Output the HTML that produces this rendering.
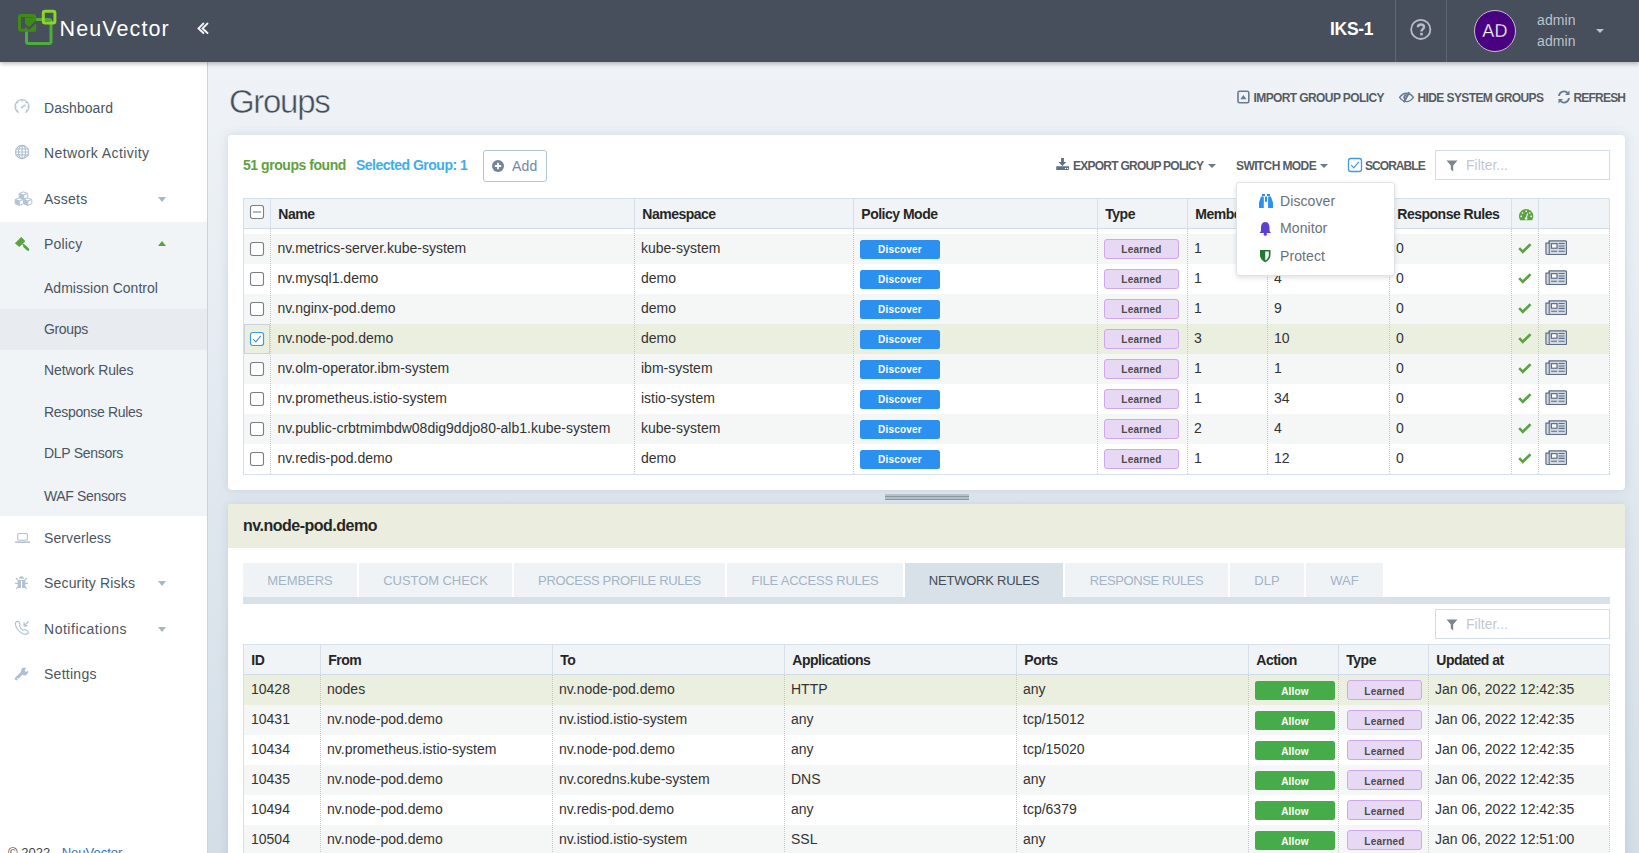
<!DOCTYPE html>
<html><head><meta charset="utf-8">
<style>
*{box-sizing:border-box;margin:0;padding:0}
html,body{width:1639px;height:853px;overflow:hidden}
body{font-family:"Liberation Sans",sans-serif;background:linear-gradient(to bottom,#eff3f7 62px,#eef2f6 100px,#d3dee7 853px);position:relative;color:#333}
.abs{position:absolute}
#hdr{position:absolute;left:0;top:0;width:1639px;height:62px;background:#464f5b;box-shadow:0 2px 4px rgba(0,0,0,.25);z-index:5}
#side{position:absolute;left:0;top:62px;width:208px;height:791px;background:#fff;border-right:1px solid #cfd1d4;z-index:3}
.nav{position:absolute;left:0;width:207px;height:40px;font-size:14px;color:#4a5563;letter-spacing:.3px}
.nav .t{position:absolute;left:44px;top:0;line-height:40px;white-space:nowrap}
.nav .ic{position:absolute;left:15px;top:13px;width:15px;height:15px}
.nav .car{position:absolute;left:158px;top:18px;width:0;height:0;border-left:4.5px solid transparent;border-right:4.5px solid transparent;border-top:5px solid #a9b4c0}
.card{position:absolute;left:228px;width:1397px;background:#fff;border-radius:4px;box-shadow:0 0 6px rgba(40,60,90,.12)}
</style></head>
<body>
<div id="hdr">
<svg class="abs" style="left:0;top:0" width="70" height="62" viewBox="0 0 70 62">
<rect x="26.5" y="19.5" width="24.5" height="24" rx="2" fill="none" stroke="#4dae3c" stroke-width="3"/>
<rect x="19.5" y="15.5" width="15.2" height="14.8" rx="1.5" fill="#464f5b" stroke="#3e8b16" stroke-width="3"/>
<path d="M25 17.5 H36 V31.5 H25 Z" fill="#3e8b16"/>
<path d="M24.5 24.5 L29 28.5 L36.5 21.5" fill="none" stroke="#464f5b" stroke-width="2.2"/>
<rect x="43.3" y="11.3" width="11.6" height="11.8" rx="1.8" fill="none" stroke="#8fd52a" stroke-width="3"/>
</svg>
<div class="abs" style="left:59.5px;top:13.5px;font-size:21.5px;line-height:30px;color:#fff;letter-spacing:1.1px">NeuVector</div>
<svg class="abs" style="left:196px;top:22px" width="14" height="13" viewBox="0 0 14 13">
<path d="M7.4 1.5 L2.5 6.4 L7.4 11 M11.5 1.5 L6.6 6.4 L11.5 11" fill="none" stroke="#f4f5f7" stroke-width="1.9" stroke-linecap="round"/>
</svg>
<div class="abs" style="left:1330px;top:18px;font-size:17.5px;line-height:22px;color:#fff;font-weight:bold;letter-spacing:-.3px">IKS-1</div>
<div class="abs" style="left:1395px;top:0;width:1px;height:62px;background:#5d6672"></div>
<div class="abs" style="left:1446px;top:0;width:1px;height:62px;background:#5d6672"></div>
<svg class="abs" style="left:1409px;top:18px" width="24" height="24" viewBox="0 0 24 24">
<circle cx="11.75" cy="11.4" r="9.6" fill="none" stroke="#b8bdc5" stroke-width="1.8"/>
<path d="M8.9 9.2 C8.9 7.3 10.3 6.4 11.9 6.4 C13.7 6.4 15 7.5 15 9.1 C15 11 12.4 11.3 12.4 13.6" fill="none" stroke="#b8bdc5" stroke-width="2.5"/>
<rect x="11.2" y="14.8" width="2.6" height="2.6" fill="#b8bdc5"/>
</svg>
<div class="abs" style="left:1474px;top:10px;width:42px;height:42px;border-radius:50%;background:#4a0181;border:1px solid #c4bfc9"></div>
<div class="abs" style="left:1474px;top:10px;width:42px;height:42px;line-height:42px;text-align:center;color:#fff;font-size:18px;letter-spacing:.2px;-webkit-text-stroke:.3px #4a0181">AD</div>
<div class="abs" style="left:1537px;top:10px;font-size:14px;line-height:20px;color:#bcc2ca;letter-spacing:.1px">admin</div>
<div class="abs" style="left:1537px;top:31px;font-size:14px;line-height:20px;color:#bcc2ca;letter-spacing:.1px">admin</div>
<div class="abs" style="left:1596px;top:29px;width:0;height:0;border-left:4px solid transparent;border-right:4px solid transparent;border-top:4.5px solid #bcc2ca"></div>
</div>
<div id="side">
<div class="abs" style="left:0;top:160px;width:207px;height:294px;background:#f0f4f7"></div>
<div class="abs" style="left:0;top:247px;width:207px;height:41px;background:#e8ecf0"></div>
<div class="abs" style="left:44px;top:36.1px;font-size:14px;line-height:20px;white-space:nowrap;color:#4a5562;letter-spacing:0.06px">Dashboard</div>
<div class="abs" style="left:44px;top:81.1px;font-size:14px;line-height:20px;white-space:nowrap;color:#4a5562;letter-spacing:0.42px">Network Activity</div>
<div class="abs" style="left:44px;top:127.1px;font-size:14px;line-height:20px;white-space:nowrap;color:#4a5562;letter-spacing:0.23px">Assets</div>
<div class="abs" style="left:44px;top:172.1px;font-size:14px;line-height:20px;white-space:nowrap;color:#4a5562;letter-spacing:0.17px">Policy</div>
<div class="abs" style="left:44px;top:216.1px;font-size:14px;line-height:20px;white-space:nowrap;color:#4a5562;letter-spacing:0.02px">Admission Control</div>
<div class="abs" style="left:44px;top:256.6px;font-size:14px;line-height:20px;white-space:nowrap;color:#4a5562;letter-spacing:-0.35px">Groups</div>
<div class="abs" style="left:44px;top:297.8px;font-size:14px;line-height:20px;white-space:nowrap;color:#4a5562;letter-spacing:-0.13px">Network Rules</div>
<div class="abs" style="left:44px;top:339.8px;font-size:14px;line-height:20px;white-space:nowrap;color:#4a5562;letter-spacing:-0.32px">Response Rules</div>
<div class="abs" style="left:44px;top:381.3px;font-size:14px;line-height:20px;white-space:nowrap;color:#4a5562;letter-spacing:-0.29px">DLP Sensors</div>
<div class="abs" style="left:44px;top:423.6px;font-size:14px;line-height:20px;white-space:nowrap;color:#4a5562;letter-spacing:-0.35px">WAF Sensors</div>
<div class="abs" style="left:44px;top:466.4px;font-size:14px;line-height:20px;white-space:nowrap;color:#4a5562;letter-spacing:0.09px">Serverless</div>
<div class="abs" style="left:44px;top:511.3px;font-size:14px;line-height:20px;white-space:nowrap;color:#4a5562;letter-spacing:0.17px">Security Risks</div>
<div class="abs" style="left:44px;top:556.7px;font-size:14px;line-height:20px;white-space:nowrap;color:#4a5562;letter-spacing:0.52px">Notifications</div>
<div class="abs" style="left:44px;top:601.9px;font-size:14px;line-height:20px;white-space:nowrap;color:#4a5562;letter-spacing:0.27px">Settings</div>
<div class="abs" style="left:158px;top:135px;width:0;height:0;border-left:4px solid transparent;border-right:4px solid transparent;border-top:5px solid #a9b5c2"></div>
<div class="abs" style="left:158px;top:179px;width:0;height:0;border-left:4px solid transparent;border-right:4px solid transparent;border-bottom:5px solid #5aa33f"></div>
<div class="abs" style="left:158px;top:519px;width:0;height:0;border-left:4px solid transparent;border-right:4px solid transparent;border-top:5px solid #a9b5c2"></div>
<div class="abs" style="left:158px;top:565px;width:0;height:0;border-left:4px solid transparent;border-right:4px solid transparent;border-top:5px solid #a9b5c2"></div>

<svg class="abs" style="left:10px;top:34px" width="26" height="22" viewBox="0 0 26 22"><path d="M8.6 16.6 A6.9 6.9 0 1 1 15.4 16.6" fill="none" stroke="#b3c4d6" stroke-width="1.3"/><path d="M12 4 V5.6 M5.2 10.8 H6.8 M17.2 10.8 H18.8 M7.2 6 L8.3 7.1 M16.8 6 L15.7 7.1 M6.6 14.5 L7.8 13.8 M17.4 14.5 L16.2 13.8" stroke="#b3c4d6" stroke-width="1.3"/><path d="M11.6 11.6 L15 9.2" stroke="#b3c4d6" stroke-width="1.6" stroke-linecap="round"/></svg>
<svg class="abs" style="left:10px;top:78px" width="26" height="24" viewBox="0 0 26 24"><circle cx="12.1" cy="12" r="6.6" fill="none" stroke="#afc0d2" stroke-width="1.2"/><ellipse cx="12.1" cy="12" rx="3.6" ry="6.6" fill="none" stroke="#afc0d2" stroke-width="1.1"/><path d="M5.6 9 H18.6 M5.4 12 H18.8 M5.6 14.9 H18.6 M12.1 5.4 V18.6" stroke="#afc0d2" stroke-width="1.1"/></svg>
<svg class="abs" style="left:10px;top:124px" width="26" height="24" viewBox="0 0 26 24"><g stroke="#b3c4d6" stroke-width="1" stroke-linejoin="round"><path d="M9.2 7.5 L13.5 5.9 L17.8 7.5 L13.5 9.1 Z" fill="#fff"/><path d="M9.2 7.5 L13.5 9.1 V13.2 L9.2 11.6 Z" fill="#b3c4d6"/><path d="M13.5 9.1 L17.8 7.5 V11.6 L13.5 13.2 Z" fill="#fff"/><path d="M5.2 13.5 L9.3 11.9 L13.3 13.5 L9.3 15.1 Z" fill="#fff"/><path d="M5.2 13.5 L9.3 15.1 V19.4 L5.2 17.8 Z" fill="#b3c4d6"/><path d="M9.3 15.1 L13.3 13.5 V17.8 L9.3 19.4 Z" fill="#fff"/><path d="M13.7 13.5 L17.8 11.9 L21.8 13.5 L17.8 15.1 Z" fill="#fff"/><path d="M13.7 13.5 L17.8 15.1 V19.4 L13.7 17.8 Z" fill="#b3c4d6"/><path d="M17.8 15.1 L21.8 13.5 V17.8 L17.8 19.4 Z" fill="#fff"/></g></svg>
<svg class="abs" style="left:14px;top:174px" width="17" height="16" viewBox="0 0 17 16"><path d="M1.35 7.3 L7.3 1.35 L10.9 5.3 L5.3 10.6 Z" fill="#5aa33f" stroke="#5aa33f" stroke-width=".8" stroke-linejoin="round"/><path d="M8.2 8.4 L9.2 7.4 L14.6 12.3 L12.9 14 Z" fill="#5aa33f"/><path d="M10.5 10.2 L14 13.6" stroke="#5aa33f" stroke-width="2.6" stroke-linecap="round"/></svg>
<svg class="abs" style="left:10px;top:464px" width="26" height="24" viewBox="0 0 26 24"><rect x="7.7" y="7.5" width="9.7" height="6.8" rx="1.2" fill="none" stroke="#afc0d2" stroke-width="1.1"/><rect x="5.1" y="15.4" width="14.9" height="1.5" fill="#afc0d2"/></svg>
<svg class="abs" style="left:10px;top:509px" width="26" height="24" viewBox="0 0 26 24"><g fill="#afc0d2"><path d="M9 7.75 A2.45 2.4 0 0 1 13.9 7.75 Z"/><rect x="7.75" y="9" width="7.6" height="7.9" rx=".8"/></g><rect x="10.9" y="9.8" width="1.2" height="7.2" fill="#fff"/><path d="M6.05 7.3 L8.2 9 M16.8 7.3 L14.6 9 M5.1 12.4 H8 M15 12.4 H17.9 M6.05 17.7 L8.2 15.9 M16.8 17.7 L14.6 15.9" stroke="#afc0d2" stroke-width="1.2"/></svg>
<svg class="abs" style="left:10px;top:554px" width="26" height="24" viewBox="0 0 26 24"><path d="M7.6 5.4 C6.2 5.4 5.3 6.6 5.4 8 C5.8 11.5 8.5 15 11.5 17 C13 18 14.5 18.5 15.8 18.3 C17.2 18 18.5 17 18.3 16 C18.2 15.3 16.8 14.6 15.5 13.6 C14.8 13.2 14.1 14.3 13 14.2 C11.5 13.5 9.8 11.5 9.5 10 C9.6 9.2 10.3 8.8 10 8 C9.5 6.8 8.6 5.4 7.6 5.4 Z" fill="none" stroke="#afc0d2" stroke-width="1.1"/><path d="M18.6 5.4 L14.4 9.6 M14.1 6.3 V9.8 H17.6" fill="none" stroke="#afc0d2" stroke-width="1.2"/></svg>
<svg class="abs" style="left:10px;top:600px" width="26" height="24" viewBox="0 0 26 24"><path d="M6.2 16.8 L12.4 10.6" stroke="#afc0d2" stroke-width="3" stroke-linecap="round"/><path d="M11.2 10.8 A3.6 3.6 0 0 1 16.2 6.1 L14.6 8.6 L16.4 10.3 L18.1 8.3 A3.6 3.6 0 0 1 13.1 12.9 Z" fill="#afc0d2"/><circle cx="7.4" cy="16.5" r=".6" fill="#fff"/></svg>

<div class="abs" style="left:8px;top:783.5px;font-size:13px;line-height:14px;color:#444;white-space:nowrap;letter-spacing:0">&copy; 2022 - <span style="color:#1f76d0">NeuVector</span></div>
</div>
<!--MAIN-->
<div class="abs" style="left:229px;top:91.57px;font-size:33px;line-height:20px;white-space:nowrap;color:#444e5a;letter-spacing:-1.3px;-webkit-text-stroke:.5px #eef2f6">Groups</div>
<div class="abs" style="left:1253.5px;top:87.84px;font-size:12px;line-height:20px;white-space:nowrap;color:#565c64;font-weight:bold;letter-spacing:-.6px">IMPORT GROUP POLICY</div>
<div class="abs" style="left:1417.5px;top:87.84px;font-size:12px;line-height:20px;white-space:nowrap;color:#565c64;font-weight:bold;letter-spacing:-.6px">HIDE SYSTEM GROUPS</div>
<div class="abs" style="left:1573.5px;top:87.84px;font-size:12px;line-height:20px;white-space:nowrap;color:#565c64;font-weight:bold;letter-spacing:-.6px;letter-spacing:-.8px">REFRESH</div>
<svg class="abs" style="left:1237px;top:90px" width="13" height="14" viewBox="0 0 13 14"><rect x="1" y="1.2" width="10.8" height="11.5" rx="1.5" fill="none" stroke="#6a7a90" stroke-width="1.6"/><path d="M3.3 9.2 L6.4 5 L9.5 9.2 Z" fill="#6a7a90"/></svg>
<svg class="abs" style="left:1395px;top:85px" width="25" height="25" viewBox="0 0 25 25"><path d="M4.6 12.4 C7 9 9.5 8.2 11.5 8.2 C13.5 8.2 16 9 18.4 12.4 C16 15.8 13.5 16.6 11.5 16.6 C9.5 16.6 7 15.8 4.6 12.4 Z" fill="none" stroke="#6a7a90" stroke-width="1.4"/><path d="M14.3 7.3 L8.8 17.3" stroke="#6a7a90" stroke-width="2"/><path d="M11.6 10 A2.5 2.5 0 0 0 10 14.4" fill="none" stroke="#6a7a90" stroke-width="1.9"/></svg>
<svg class="abs" style="left:1557px;top:90px" width="14" height="14" viewBox="0 0 14 14"><path d="M2 6 A5 5 0 0 1 11 3.5" fill="none" stroke="#6a7a90" stroke-width="1.8"/><path d="M12.5 0.5 V5 H8 Z" fill="#6a7a90"/><path d="M12 8 A5 5 0 0 1 3 10.5" fill="none" stroke="#6a7a90" stroke-width="1.8"/><path d="M1.5 13.5 V9 H6 Z" fill="#6a7a90"/></svg>
<div class="abs" style="left:228px;top:135px;width:1397px;height:355px;background:#fff;border-radius:4px;box-shadow:0 0 10px rgba(70,100,140,.17)"></div>
<div class="abs" style="left:243px;top:155.15px;font-size:14px;line-height:20px;white-space:nowrap;color:#5fa140;font-weight:bold;letter-spacing:-.45px">51 groups found</div>
<div class="abs" style="left:356px;top:155.15px;font-size:14px;line-height:20px;white-space:nowrap;color:#3daee9;font-weight:bold;letter-spacing:-.5px">Selected Group: 1</div>
<div class="abs" style="left:483px;top:150px;width:64px;height:32px;border:1px solid #b3c4d2;border-radius:3px;background:#fff"></div>
<svg class="abs" style="left:491px;top:159px" width="14" height="14" viewBox="0 0 14 14"><circle cx="7" cy="7" r="6" fill="#72839b"/><path d="M7 3.8 V10.2 M3.8 7 H10.2" stroke="#fff" stroke-width="1.8"/></svg>
<div class="abs" style="left:512px;top:156.15px;font-size:14px;line-height:20px;white-space:nowrap;color:#76879e;letter-spacing:.2px">Add</div>
<div class="abs" style="left:1073px;top:155.84px;font-size:12px;line-height:20px;white-space:nowrap;color:#565c64;font-weight:bold;letter-spacing:-.6px;letter-spacing:-.75px">EXPORT GROUP POLICY</div>
<svg class="abs" style="left:1050px;top:150px" width="25" height="30" viewBox="0 0 25 30"><path d="M11.1 8.1 H13.9 V12.1 H16.4 L12.4 15.9 L8.4 12.1 H11.1 Z" fill="#5f7089"/><rect x="6.2" y="16.2" width="12.8" height="3.7" rx=".4" fill="#5f7089"/><circle cx="15.5" cy="18.4" r=".6" fill="#fff"/><circle cx="17.4" cy="18.4" r=".6" fill="#fff"/></svg>
<div class="abs" style="left:1207.5px;top:163.5px;width:0;height:0;border-left:4.0px solid transparent;border-right:4.0px solid transparent;border-top:4.5px solid #6a7a90"></div>
<div class="abs" style="left:1236px;top:155.84px;font-size:12px;line-height:20px;white-space:nowrap;color:#565c64;font-weight:bold;letter-spacing:-.6px">SWITCH MODE</div>
<div class="abs" style="left:1320px;top:163.5px;width:0;height:0;border-left:4.0px solid transparent;border-right:4.0px solid transparent;border-top:4.5px solid #6a7a90"></div>
<svg class="abs" style="left:1347px;top:157px" width="16" height="16" viewBox="0 0 16 16"><rect x="1.5" y="1.5" width="13" height="13" rx="2.2" fill="#fff" stroke="#3d9ae3" stroke-width="1.3"/><path d="M4.2 8.2 L6.8 10.8 L11.8 4.8" fill="none" stroke="#3d9ae3" stroke-width="1.2"/></svg>
<div class="abs" style="left:1365px;top:155.84px;font-size:12px;line-height:20px;white-space:nowrap;color:#565c64;font-weight:bold;letter-spacing:-.6px;letter-spacing:-.95px">SCORABLE</div>
<div class="abs" style="left:1435px;top:150px;width:175px;height:30px;border:1px solid #d3dde8;background:#fff"></div>
<svg class="abs" style="left:1446px;top:160px" width="12" height="12" viewBox="0 0 12 12"><path d="M0.5 0.5 H11.5 L7.2 5.5 V11.5 L4.8 9.5 V5.5 Z" fill="#7e858e"/></svg>
<div class="abs" style="left:1466px;top:155.15px;font-size:14px;line-height:20px;white-space:nowrap;color:#c3c7d0">Filter...</div>
<div class="abs" style="left:243px;top:198px;width:1367px;height:31px;background:#f0f4f7;border:1px solid #d6e0ea;border-bottom:1px solid #cfdbe7"></div>
<div class="abs" style="left:270px;top:199px;width:1px;height:30px;background:#d6e0ea"></div>
<div class="abs" style="left:634px;top:199px;width:1px;height:30px;background:#d6e0ea"></div>
<div class="abs" style="left:853px;top:199px;width:1px;height:30px;background:#d6e0ea"></div>
<div class="abs" style="left:1097px;top:199px;width:1px;height:30px;background:#d6e0ea"></div>
<div class="abs" style="left:1187px;top:199px;width:1px;height:30px;background:#d6e0ea"></div>
<div class="abs" style="left:1267px;top:199px;width:1px;height:30px;background:#d6e0ea"></div>
<div class="abs" style="left:1389px;top:199px;width:1px;height:30px;background:#d6e0ea"></div>
<div class="abs" style="left:1511px;top:199px;width:1px;height:30px;background:#d6e0ea"></div>
<div class="abs" style="left:1538px;top:199px;width:1px;height:30px;background:#d6e0ea"></div>
<div class="abs" style="left:278.3px;top:204.15px;font-size:14px;line-height:20px;white-space:nowrap;color:#262626;font-weight:bold;letter-spacing:-.5px">Name</div>
<div class="abs" style="left:642.3px;top:204.15px;font-size:14px;line-height:20px;white-space:nowrap;color:#262626;font-weight:bold;letter-spacing:-.5px">Namespace</div>
<div class="abs" style="left:861.3px;top:204.15px;font-size:14px;line-height:20px;white-space:nowrap;color:#262626;font-weight:bold;letter-spacing:-.5px">Policy Mode</div>
<div class="abs" style="left:1105.3px;top:204.15px;font-size:14px;line-height:20px;white-space:nowrap;color:#262626;font-weight:bold;letter-spacing:-.5px">Type</div>
<div class="abs" style="left:1195.3px;top:204.15px;font-size:14px;line-height:20px;white-space:nowrap;color:#262626;font-weight:bold;letter-spacing:-.5px">Members</div>
<div class="abs" style="left:1397.3px;top:204.15px;font-size:14px;line-height:20px;white-space:nowrap;color:#262626;font-weight:bold;letter-spacing:-.5px">Response Rules</div>
<svg class="abs" style="left:249px;top:204px" width="16" height="16" viewBox="0 0 16 16"><rect x="1.5" y="1.5" width="13" height="13" rx="2.2" fill="#fff" stroke="#7a7f86" stroke-width="1.1"/><path d="M4 8 H12" stroke="#7a7f86" stroke-width="1.1"/></svg>
<svg class="abs" style="left:1519px;top:209px" width="15" height="12" viewBox="0 0 15 12"><path d="M1.26 11.2 A7.15 7.15 0 1 1 13.04 11.2 Z" fill="#5aa440"/><rect x="6.4" y="1.5" width="1.6" height="1.6" fill="#eef3ee"/><rect x="2.8" y="3.2" width="1.5" height="1.5" fill="#eef3ee" transform="rotate(45 3.55 3.95)"/><rect x="10" y="3.2" width="1.5" height="1.5" fill="#eef3ee" transform="rotate(45 10.75 3.95)"/><rect x="1.4" y="6.6" width="1.6" height="1.6" fill="#eef3ee"/><rect x="11.3" y="6.6" width="1.6" height="1.6" fill="#eef3ee"/><path d="M7.1 9.5 L8.6 4.5" stroke="#eef3ee" stroke-width="1.1"/><circle cx="7.1" cy="9.6" r="1.3" fill="#eef3ee"/></svg>
<div class="abs" style="left:243px;top:229px;width:1367px;height:246px;border:1px solid #d6e0ea;border-top:none;border-right:none;background:#fff"></div>
<div class="abs" style="left:1609px;top:229px;width:1px;height:245px;background-image:linear-gradient(#b9c9db 50%,transparent 50%);background-size:1px 2px"></div>
<div class="abs" style="left:244px;top:234px;width:1365px;height:30px;background:#f5f7f7"></div>
<div class="abs" style="left:244px;top:264px;width:1365px;height:30px;background:#fff"></div>
<div class="abs" style="left:244px;top:294px;width:1365px;height:30px;background:#f5f7f7"></div>
<div class="abs" style="left:244px;top:324px;width:1365px;height:30px;background:#ebefdf"></div>
<div class="abs" style="left:244px;top:324px;width:26px;height:30px;border:1px solid #c8d3de;background:#ebefdf"></div>
<div class="abs" style="left:244px;top:354px;width:1365px;height:30px;background:#f5f7f7"></div>
<div class="abs" style="left:244px;top:384px;width:1365px;height:30px;background:#fff"></div>
<div class="abs" style="left:244px;top:414px;width:1365px;height:30px;background:#f5f7f7"></div>
<div class="abs" style="left:244px;top:444px;width:1365px;height:30px;background:#fff"></div>
<div class="abs" style="left:270px;top:229px;width:1px;height:245px;background-image:linear-gradient(#b9c9db 50%,transparent 50%);background-size:1px 2px"></div>
<div class="abs" style="left:634px;top:229px;width:1px;height:245px;background-image:linear-gradient(#b9c9db 50%,transparent 50%);background-size:1px 2px"></div>
<div class="abs" style="left:853px;top:229px;width:1px;height:245px;background-image:linear-gradient(#b9c9db 50%,transparent 50%);background-size:1px 2px"></div>
<div class="abs" style="left:1097px;top:229px;width:1px;height:245px;background-image:linear-gradient(#b9c9db 50%,transparent 50%);background-size:1px 2px"></div>
<div class="abs" style="left:1187px;top:229px;width:1px;height:245px;background-image:linear-gradient(#b9c9db 50%,transparent 50%);background-size:1px 2px"></div>
<div class="abs" style="left:1267px;top:229px;width:1px;height:245px;background-image:linear-gradient(#b9c9db 50%,transparent 50%);background-size:1px 2px"></div>
<div class="abs" style="left:1389px;top:229px;width:1px;height:245px;background-image:linear-gradient(#b9c9db 50%,transparent 50%);background-size:1px 2px"></div>
<div class="abs" style="left:1511px;top:229px;width:1px;height:245px;background-image:linear-gradient(#b9c9db 50%,transparent 50%);background-size:1px 2px"></div>
<div class="abs" style="left:1538px;top:229px;width:1px;height:245px;background-image:linear-gradient(#b9c9db 50%,transparent 50%);background-size:1px 2px"></div>
<svg class="abs" style="left:249px;top:241px" width="16" height="16" viewBox="0 0 16 16"><rect x="1.5" y="1.5" width="13" height="13" rx="2.2" fill="#fff" stroke="#7a7f86" stroke-width="1.1"/></svg>
<div class="abs" style="left:277.5px;top:238.35px;font-size:14px;line-height:20px;white-space:nowrap;color:#333">nv.metrics-server.kube-system</div>
<div class="abs" style="left:641px;top:238.35px;font-size:14px;line-height:20px;white-space:nowrap;color:#333">kube-system</div>
<div class="abs" style="left:860px;top:240px;width:80px;height:19px;background:#2b90ef;border-radius:2.5px"></div>
<div class="abs" style="left:860px;top:240.03px;font-size:10px;line-height:20px;white-space:nowrap;width:80px;text-align:center;color:#fff;font-weight:bold;letter-spacing:.2px">Discover</div>
<div class="abs" style="left:1104px;top:239px;width:75px;height:20px;background:#e7d9f3;border:1px solid #cfa6f0;border-radius:3px"></div>
<div class="abs" style="left:1104px;top:240.03px;font-size:10px;line-height:20px;white-space:nowrap;width:75px;text-align:center;color:#4b4b4b;font-weight:bold;letter-spacing:.2px">Learned</div>
<div class="abs" style="left:1194px;top:238.35px;font-size:14px;line-height:20px;white-space:nowrap;color:#333">1</div>
<div class="abs" style="left:1274px;top:238.35px;font-size:14px;line-height:20px;white-space:nowrap;color:#333">4</div>
<div class="abs" style="left:1396px;top:238.35px;font-size:14px;line-height:20px;white-space:nowrap;color:#333">0</div>
<svg class="abs" style="left:1518px;top:243px" width="14" height="11" viewBox="0 0 14 11"><path d="M1.2 5.2 L4.8 8.8 L12.5 1.2" fill="none" stroke="#5aa440" stroke-width="2.6"/></svg>
<svg class="abs" style="left:1544.5px;top:239.7px" width="22.5" height="15.5" viewBox="0 0 24 17" preserveAspectRatio="none"><path d="M4.5 1 H21.5 A1.5 1.5 0 0 1 23 2.5 V14.5 A1.5 1.5 0 0 1 21.5 16 H2.5 A1.5 1.5 0 0 1 1 14.5 V3.5 H4.5 Z" fill="#d3d9e2" stroke="#5f6d84" stroke-width="1.3"/><path d="M4.5 1.5 V15.5" stroke="#5f6d84" stroke-width="1.1"/><rect x="6.8" y="4" width="6" height="5" fill="#fff" stroke="#5f6d84" stroke-width="1.3"/><path d="M14.5 3.8 H21 M14.5 6.5 H21 M14.5 9.2 H21 M6.5 12.3 H12.8 M14.5 12.3 H21" stroke="#5f6d84" stroke-width="1.2"/></svg>
<svg class="abs" style="left:249px;top:271px" width="16" height="16" viewBox="0 0 16 16"><rect x="1.5" y="1.5" width="13" height="13" rx="2.2" fill="#fff" stroke="#7a7f86" stroke-width="1.1"/></svg>
<div class="abs" style="left:277.5px;top:268.35px;font-size:14px;line-height:20px;white-space:nowrap;color:#333">nv.mysql1.demo</div>
<div class="abs" style="left:641px;top:268.35px;font-size:14px;line-height:20px;white-space:nowrap;color:#333">demo</div>
<div class="abs" style="left:860px;top:270px;width:80px;height:19px;background:#2b90ef;border-radius:2.5px"></div>
<div class="abs" style="left:860px;top:270.04px;font-size:10px;line-height:20px;white-space:nowrap;width:80px;text-align:center;color:#fff;font-weight:bold;letter-spacing:.2px">Discover</div>
<div class="abs" style="left:1104px;top:269px;width:75px;height:20px;background:#e7d9f3;border:1px solid #cfa6f0;border-radius:3px"></div>
<div class="abs" style="left:1104px;top:270.04px;font-size:10px;line-height:20px;white-space:nowrap;width:75px;text-align:center;color:#4b4b4b;font-weight:bold;letter-spacing:.2px">Learned</div>
<div class="abs" style="left:1194px;top:268.35px;font-size:14px;line-height:20px;white-space:nowrap;color:#333">1</div>
<div class="abs" style="left:1274px;top:268.35px;font-size:14px;line-height:20px;white-space:nowrap;color:#333">4</div>
<div class="abs" style="left:1396px;top:268.35px;font-size:14px;line-height:20px;white-space:nowrap;color:#333">0</div>
<svg class="abs" style="left:1518px;top:273px" width="14" height="11" viewBox="0 0 14 11"><path d="M1.2 5.2 L4.8 8.8 L12.5 1.2" fill="none" stroke="#5aa440" stroke-width="2.6"/></svg>
<svg class="abs" style="left:1544.5px;top:269.7px" width="22.5" height="15.5" viewBox="0 0 24 17" preserveAspectRatio="none"><path d="M4.5 1 H21.5 A1.5 1.5 0 0 1 23 2.5 V14.5 A1.5 1.5 0 0 1 21.5 16 H2.5 A1.5 1.5 0 0 1 1 14.5 V3.5 H4.5 Z" fill="#d3d9e2" stroke="#5f6d84" stroke-width="1.3"/><path d="M4.5 1.5 V15.5" stroke="#5f6d84" stroke-width="1.1"/><rect x="6.8" y="4" width="6" height="5" fill="#fff" stroke="#5f6d84" stroke-width="1.3"/><path d="M14.5 3.8 H21 M14.5 6.5 H21 M14.5 9.2 H21 M6.5 12.3 H12.8 M14.5 12.3 H21" stroke="#5f6d84" stroke-width="1.2"/></svg>
<svg class="abs" style="left:249px;top:301px" width="16" height="16" viewBox="0 0 16 16"><rect x="1.5" y="1.5" width="13" height="13" rx="2.2" fill="#fff" stroke="#7a7f86" stroke-width="1.1"/></svg>
<div class="abs" style="left:277.5px;top:298.35px;font-size:14px;line-height:20px;white-space:nowrap;color:#333">nv.nginx-pod.demo</div>
<div class="abs" style="left:641px;top:298.35px;font-size:14px;line-height:20px;white-space:nowrap;color:#333">demo</div>
<div class="abs" style="left:860px;top:300px;width:80px;height:19px;background:#2b90ef;border-radius:2.5px"></div>
<div class="abs" style="left:860px;top:300.04px;font-size:10px;line-height:20px;white-space:nowrap;width:80px;text-align:center;color:#fff;font-weight:bold;letter-spacing:.2px">Discover</div>
<div class="abs" style="left:1104px;top:299px;width:75px;height:20px;background:#e7d9f3;border:1px solid #cfa6f0;border-radius:3px"></div>
<div class="abs" style="left:1104px;top:300.04px;font-size:10px;line-height:20px;white-space:nowrap;width:75px;text-align:center;color:#4b4b4b;font-weight:bold;letter-spacing:.2px">Learned</div>
<div class="abs" style="left:1194px;top:298.35px;font-size:14px;line-height:20px;white-space:nowrap;color:#333">1</div>
<div class="abs" style="left:1274px;top:298.35px;font-size:14px;line-height:20px;white-space:nowrap;color:#333">9</div>
<div class="abs" style="left:1396px;top:298.35px;font-size:14px;line-height:20px;white-space:nowrap;color:#333">0</div>
<svg class="abs" style="left:1518px;top:303px" width="14" height="11" viewBox="0 0 14 11"><path d="M1.2 5.2 L4.8 8.8 L12.5 1.2" fill="none" stroke="#5aa440" stroke-width="2.6"/></svg>
<svg class="abs" style="left:1544.5px;top:299.7px" width="22.5" height="15.5" viewBox="0 0 24 17" preserveAspectRatio="none"><path d="M4.5 1 H21.5 A1.5 1.5 0 0 1 23 2.5 V14.5 A1.5 1.5 0 0 1 21.5 16 H2.5 A1.5 1.5 0 0 1 1 14.5 V3.5 H4.5 Z" fill="#d3d9e2" stroke="#5f6d84" stroke-width="1.3"/><path d="M4.5 1.5 V15.5" stroke="#5f6d84" stroke-width="1.1"/><rect x="6.8" y="4" width="6" height="5" fill="#fff" stroke="#5f6d84" stroke-width="1.3"/><path d="M14.5 3.8 H21 M14.5 6.5 H21 M14.5 9.2 H21 M6.5 12.3 H12.8 M14.5 12.3 H21" stroke="#5f6d84" stroke-width="1.2"/></svg>
<svg class="abs" style="left:249px;top:331px" width="16" height="16" viewBox="0 0 16 16"><rect x="1.5" y="1.5" width="13" height="13" rx="2.2" fill="#fff" stroke="#3d9ae3" stroke-width="1.2"/><path d="M4.2 8.2 L6.8 10.8 L11.8 4.8" fill="none" stroke="#3d9ae3" stroke-width="1.2"/></svg>
<div class="abs" style="left:277.5px;top:328.35px;font-size:14px;line-height:20px;white-space:nowrap;color:#333">nv.node-pod.demo</div>
<div class="abs" style="left:641px;top:328.35px;font-size:14px;line-height:20px;white-space:nowrap;color:#333">demo</div>
<div class="abs" style="left:860px;top:330px;width:80px;height:19px;background:#2b90ef;border-radius:2.5px"></div>
<div class="abs" style="left:860px;top:330.04px;font-size:10px;line-height:20px;white-space:nowrap;width:80px;text-align:center;color:#fff;font-weight:bold;letter-spacing:.2px">Discover</div>
<div class="abs" style="left:1104px;top:329px;width:75px;height:20px;background:#e7d9f3;border:1px solid #cfa6f0;border-radius:3px"></div>
<div class="abs" style="left:1104px;top:330.04px;font-size:10px;line-height:20px;white-space:nowrap;width:75px;text-align:center;color:#4b4b4b;font-weight:bold;letter-spacing:.2px">Learned</div>
<div class="abs" style="left:1194px;top:328.35px;font-size:14px;line-height:20px;white-space:nowrap;color:#333">3</div>
<div class="abs" style="left:1274px;top:328.35px;font-size:14px;line-height:20px;white-space:nowrap;color:#333">10</div>
<div class="abs" style="left:1396px;top:328.35px;font-size:14px;line-height:20px;white-space:nowrap;color:#333">0</div>
<svg class="abs" style="left:1518px;top:333px" width="14" height="11" viewBox="0 0 14 11"><path d="M1.2 5.2 L4.8 8.8 L12.5 1.2" fill="none" stroke="#5aa440" stroke-width="2.6"/></svg>
<svg class="abs" style="left:1544.5px;top:329.7px" width="22.5" height="15.5" viewBox="0 0 24 17" preserveAspectRatio="none"><path d="M4.5 1 H21.5 A1.5 1.5 0 0 1 23 2.5 V14.5 A1.5 1.5 0 0 1 21.5 16 H2.5 A1.5 1.5 0 0 1 1 14.5 V3.5 H4.5 Z" fill="#d3d9e2" stroke="#5f6d84" stroke-width="1.3"/><path d="M4.5 1.5 V15.5" stroke="#5f6d84" stroke-width="1.1"/><rect x="6.8" y="4" width="6" height="5" fill="#fff" stroke="#5f6d84" stroke-width="1.3"/><path d="M14.5 3.8 H21 M14.5 6.5 H21 M14.5 9.2 H21 M6.5 12.3 H12.8 M14.5 12.3 H21" stroke="#5f6d84" stroke-width="1.2"/></svg>
<svg class="abs" style="left:249px;top:361px" width="16" height="16" viewBox="0 0 16 16"><rect x="1.5" y="1.5" width="13" height="13" rx="2.2" fill="#fff" stroke="#7a7f86" stroke-width="1.1"/></svg>
<div class="abs" style="left:277.5px;top:358.35px;font-size:14px;line-height:20px;white-space:nowrap;color:#333">nv.olm-operator.ibm-system</div>
<div class="abs" style="left:641px;top:358.35px;font-size:14px;line-height:20px;white-space:nowrap;color:#333">ibm-system</div>
<div class="abs" style="left:860px;top:360px;width:80px;height:19px;background:#2b90ef;border-radius:2.5px"></div>
<div class="abs" style="left:860px;top:360.04px;font-size:10px;line-height:20px;white-space:nowrap;width:80px;text-align:center;color:#fff;font-weight:bold;letter-spacing:.2px">Discover</div>
<div class="abs" style="left:1104px;top:359px;width:75px;height:20px;background:#e7d9f3;border:1px solid #cfa6f0;border-radius:3px"></div>
<div class="abs" style="left:1104px;top:360.04px;font-size:10px;line-height:20px;white-space:nowrap;width:75px;text-align:center;color:#4b4b4b;font-weight:bold;letter-spacing:.2px">Learned</div>
<div class="abs" style="left:1194px;top:358.35px;font-size:14px;line-height:20px;white-space:nowrap;color:#333">1</div>
<div class="abs" style="left:1274px;top:358.35px;font-size:14px;line-height:20px;white-space:nowrap;color:#333">1</div>
<div class="abs" style="left:1396px;top:358.35px;font-size:14px;line-height:20px;white-space:nowrap;color:#333">0</div>
<svg class="abs" style="left:1518px;top:363px" width="14" height="11" viewBox="0 0 14 11"><path d="M1.2 5.2 L4.8 8.8 L12.5 1.2" fill="none" stroke="#5aa440" stroke-width="2.6"/></svg>
<svg class="abs" style="left:1544.5px;top:359.7px" width="22.5" height="15.5" viewBox="0 0 24 17" preserveAspectRatio="none"><path d="M4.5 1 H21.5 A1.5 1.5 0 0 1 23 2.5 V14.5 A1.5 1.5 0 0 1 21.5 16 H2.5 A1.5 1.5 0 0 1 1 14.5 V3.5 H4.5 Z" fill="#d3d9e2" stroke="#5f6d84" stroke-width="1.3"/><path d="M4.5 1.5 V15.5" stroke="#5f6d84" stroke-width="1.1"/><rect x="6.8" y="4" width="6" height="5" fill="#fff" stroke="#5f6d84" stroke-width="1.3"/><path d="M14.5 3.8 H21 M14.5 6.5 H21 M14.5 9.2 H21 M6.5 12.3 H12.8 M14.5 12.3 H21" stroke="#5f6d84" stroke-width="1.2"/></svg>
<svg class="abs" style="left:249px;top:391px" width="16" height="16" viewBox="0 0 16 16"><rect x="1.5" y="1.5" width="13" height="13" rx="2.2" fill="#fff" stroke="#7a7f86" stroke-width="1.1"/></svg>
<div class="abs" style="left:277.5px;top:388.35px;font-size:14px;line-height:20px;white-space:nowrap;color:#333">nv.prometheus.istio-system</div>
<div class="abs" style="left:641px;top:388.35px;font-size:14px;line-height:20px;white-space:nowrap;color:#333">istio-system</div>
<div class="abs" style="left:860px;top:390px;width:80px;height:19px;background:#2b90ef;border-radius:2.5px"></div>
<div class="abs" style="left:860px;top:390.04px;font-size:10px;line-height:20px;white-space:nowrap;width:80px;text-align:center;color:#fff;font-weight:bold;letter-spacing:.2px">Discover</div>
<div class="abs" style="left:1104px;top:389px;width:75px;height:20px;background:#e7d9f3;border:1px solid #cfa6f0;border-radius:3px"></div>
<div class="abs" style="left:1104px;top:390.04px;font-size:10px;line-height:20px;white-space:nowrap;width:75px;text-align:center;color:#4b4b4b;font-weight:bold;letter-spacing:.2px">Learned</div>
<div class="abs" style="left:1194px;top:388.35px;font-size:14px;line-height:20px;white-space:nowrap;color:#333">1</div>
<div class="abs" style="left:1274px;top:388.35px;font-size:14px;line-height:20px;white-space:nowrap;color:#333">34</div>
<div class="abs" style="left:1396px;top:388.35px;font-size:14px;line-height:20px;white-space:nowrap;color:#333">0</div>
<svg class="abs" style="left:1518px;top:393px" width="14" height="11" viewBox="0 0 14 11"><path d="M1.2 5.2 L4.8 8.8 L12.5 1.2" fill="none" stroke="#5aa440" stroke-width="2.6"/></svg>
<svg class="abs" style="left:1544.5px;top:389.7px" width="22.5" height="15.5" viewBox="0 0 24 17" preserveAspectRatio="none"><path d="M4.5 1 H21.5 A1.5 1.5 0 0 1 23 2.5 V14.5 A1.5 1.5 0 0 1 21.5 16 H2.5 A1.5 1.5 0 0 1 1 14.5 V3.5 H4.5 Z" fill="#d3d9e2" stroke="#5f6d84" stroke-width="1.3"/><path d="M4.5 1.5 V15.5" stroke="#5f6d84" stroke-width="1.1"/><rect x="6.8" y="4" width="6" height="5" fill="#fff" stroke="#5f6d84" stroke-width="1.3"/><path d="M14.5 3.8 H21 M14.5 6.5 H21 M14.5 9.2 H21 M6.5 12.3 H12.8 M14.5 12.3 H21" stroke="#5f6d84" stroke-width="1.2"/></svg>
<svg class="abs" style="left:249px;top:421px" width="16" height="16" viewBox="0 0 16 16"><rect x="1.5" y="1.5" width="13" height="13" rx="2.2" fill="#fff" stroke="#7a7f86" stroke-width="1.1"/></svg>
<div class="abs" style="left:277.5px;top:418.35px;font-size:14px;line-height:20px;white-space:nowrap;color:#333">nv.public-crbtmimbdw08dig9ddjo80-alb1.kube-system</div>
<div class="abs" style="left:641px;top:418.35px;font-size:14px;line-height:20px;white-space:nowrap;color:#333">kube-system</div>
<div class="abs" style="left:860px;top:420px;width:80px;height:19px;background:#2b90ef;border-radius:2.5px"></div>
<div class="abs" style="left:860px;top:420.04px;font-size:10px;line-height:20px;white-space:nowrap;width:80px;text-align:center;color:#fff;font-weight:bold;letter-spacing:.2px">Discover</div>
<div class="abs" style="left:1104px;top:419px;width:75px;height:20px;background:#e7d9f3;border:1px solid #cfa6f0;border-radius:3px"></div>
<div class="abs" style="left:1104px;top:420.04px;font-size:10px;line-height:20px;white-space:nowrap;width:75px;text-align:center;color:#4b4b4b;font-weight:bold;letter-spacing:.2px">Learned</div>
<div class="abs" style="left:1194px;top:418.35px;font-size:14px;line-height:20px;white-space:nowrap;color:#333">2</div>
<div class="abs" style="left:1274px;top:418.35px;font-size:14px;line-height:20px;white-space:nowrap;color:#333">4</div>
<div class="abs" style="left:1396px;top:418.35px;font-size:14px;line-height:20px;white-space:nowrap;color:#333">0</div>
<svg class="abs" style="left:1518px;top:423px" width="14" height="11" viewBox="0 0 14 11"><path d="M1.2 5.2 L4.8 8.8 L12.5 1.2" fill="none" stroke="#5aa440" stroke-width="2.6"/></svg>
<svg class="abs" style="left:1544.5px;top:419.7px" width="22.5" height="15.5" viewBox="0 0 24 17" preserveAspectRatio="none"><path d="M4.5 1 H21.5 A1.5 1.5 0 0 1 23 2.5 V14.5 A1.5 1.5 0 0 1 21.5 16 H2.5 A1.5 1.5 0 0 1 1 14.5 V3.5 H4.5 Z" fill="#d3d9e2" stroke="#5f6d84" stroke-width="1.3"/><path d="M4.5 1.5 V15.5" stroke="#5f6d84" stroke-width="1.1"/><rect x="6.8" y="4" width="6" height="5" fill="#fff" stroke="#5f6d84" stroke-width="1.3"/><path d="M14.5 3.8 H21 M14.5 6.5 H21 M14.5 9.2 H21 M6.5 12.3 H12.8 M14.5 12.3 H21" stroke="#5f6d84" stroke-width="1.2"/></svg>
<svg class="abs" style="left:249px;top:451px" width="16" height="16" viewBox="0 0 16 16"><rect x="1.5" y="1.5" width="13" height="13" rx="2.2" fill="#fff" stroke="#7a7f86" stroke-width="1.1"/></svg>
<div class="abs" style="left:277.5px;top:448.35px;font-size:14px;line-height:20px;white-space:nowrap;color:#333">nv.redis-pod.demo</div>
<div class="abs" style="left:641px;top:448.35px;font-size:14px;line-height:20px;white-space:nowrap;color:#333">demo</div>
<div class="abs" style="left:860px;top:450px;width:80px;height:19px;background:#2b90ef;border-radius:2.5px"></div>
<div class="abs" style="left:860px;top:450.04px;font-size:10px;line-height:20px;white-space:nowrap;width:80px;text-align:center;color:#fff;font-weight:bold;letter-spacing:.2px">Discover</div>
<div class="abs" style="left:1104px;top:449px;width:75px;height:20px;background:#e7d9f3;border:1px solid #cfa6f0;border-radius:3px"></div>
<div class="abs" style="left:1104px;top:450.04px;font-size:10px;line-height:20px;white-space:nowrap;width:75px;text-align:center;color:#4b4b4b;font-weight:bold;letter-spacing:.2px">Learned</div>
<div class="abs" style="left:1194px;top:448.35px;font-size:14px;line-height:20px;white-space:nowrap;color:#333">1</div>
<div class="abs" style="left:1274px;top:448.35px;font-size:14px;line-height:20px;white-space:nowrap;color:#333">12</div>
<div class="abs" style="left:1396px;top:448.35px;font-size:14px;line-height:20px;white-space:nowrap;color:#333">0</div>
<svg class="abs" style="left:1518px;top:453px" width="14" height="11" viewBox="0 0 14 11"><path d="M1.2 5.2 L4.8 8.8 L12.5 1.2" fill="none" stroke="#5aa440" stroke-width="2.6"/></svg>
<svg class="abs" style="left:1544.5px;top:449.7px" width="22.5" height="15.5" viewBox="0 0 24 17" preserveAspectRatio="none"><path d="M4.5 1 H21.5 A1.5 1.5 0 0 1 23 2.5 V14.5 A1.5 1.5 0 0 1 21.5 16 H2.5 A1.5 1.5 0 0 1 1 14.5 V3.5 H4.5 Z" fill="#d3d9e2" stroke="#5f6d84" stroke-width="1.3"/><path d="M4.5 1.5 V15.5" stroke="#5f6d84" stroke-width="1.1"/><rect x="6.8" y="4" width="6" height="5" fill="#fff" stroke="#5f6d84" stroke-width="1.3"/><path d="M14.5 3.8 H21 M14.5 6.5 H21 M14.5 9.2 H21 M6.5 12.3 H12.8 M14.5 12.3 H21" stroke="#5f6d84" stroke-width="1.2"/></svg>
<div class="abs" style="left:1236px;top:182px;width:159px;height:94px;background:#fff;border:1px solid #dfe3e8;border-radius:3px;box-shadow:0 2px 5px rgba(0,0,0,.12)"></div>
<div class="abs" style="left:1280px;top:191.15px;font-size:14px;line-height:20px;white-space:nowrap;color:#6b7078;letter-spacing:.1px">Discover</div>
<div class="abs" style="left:1280px;top:218.15px;font-size:14px;line-height:20px;white-space:nowrap;color:#6b7078;letter-spacing:.1px">Monitor</div>
<div class="abs" style="left:1280px;top:246.15px;font-size:14px;line-height:20px;white-space:nowrap;color:#6b7078;letter-spacing:.1px">Protect</div>
<svg class="abs" style="left:1252px;top:188px" width="28" height="24" viewBox="0 0 28 24"><g fill="#2b90f0"><rect x="10" y="6" width="3" height="2"/><rect x="15" y="6" width="3" height="2"/><path d="M9 8.5 H11.8 V19.9 H7 V14.5 Z"/><rect x="13" y="8.5" width="2" height="5.3"/><path d="M16.1 8.5 H18.9 L21 14.5 V19.9 H16.1 Z"/></g></svg>
<svg class="abs" style="left:1258px;top:221px" width="15" height="15" viewBox="0 0 15 15"><path d="M7.3 1 C4 1 3 4 3 7 V10 L1.5 12 H13 L11.5 10 V7 C11.5 4 10.5 1 7.3 1 Z" fill="#5b3fd2"/><circle cx="7.3" cy="13.2" r="1.6" fill="#5b3fd2"/></svg>
<svg class="abs" style="left:1259px;top:249px" width="13" height="14" viewBox="0 0 13 14"><path d="M1 1 H11.5 V6 C11.5 9.5 9 12 6.25 13.2 C3.5 12 1 9.5 1 6 Z" fill="#237834"/><path d="M6.25 2.6 H9.8 V6 C9.8 8.5 8.3 10.5 6.25 11.4 Z" fill="#fff"/></svg>
<div class="abs" style="left:885px;top:494px;width:84px;height:6px;background:#b6c1c9"></div>
<div class="abs" style="left:885px;top:496px;width:84px;height:1px;background:#8d99a1"></div>
<div class="abs" style="left:885px;top:499px;width:84px;height:1px;background:#8d99a1"></div>
<div class="abs" style="left:228px;top:504px;width:1397px;height:360px;background:#fff;border-radius:4px 4px 0 0;box-shadow:0 0 10px rgba(70,100,140,.17)"></div>
<div class="abs" style="left:228px;top:504px;width:1397px;height:44px;background:#ebeedf;border-radius:4px 4px 0 0"></div>
<div class="abs" style="left:243px;top:516.26px;font-size:16px;line-height:20px;white-space:nowrap;color:#262626;font-weight:bold;letter-spacing:-.5px">nv.node-pod.demo</div>
<div class="abs" style="left:243px;top:563px;width:114px;height:34px;background:#eff3f6"></div>
<div class="abs" style="left:243px;top:570.50px;font-size:13px;line-height:20px;white-space:nowrap;width:114px;text-align:center;color:#a4b3c5;letter-spacing:-0.03px">MEMBERS</div>
<div class="abs" style="left:359px;top:563px;width:153px;height:34px;background:#eff3f6"></div>
<div class="abs" style="left:359px;top:570.50px;font-size:13px;line-height:20px;white-space:nowrap;width:153px;text-align:center;color:#a4b3c5;letter-spacing:-0.06px">CUSTOM CHECK</div>
<div class="abs" style="left:514px;top:563px;width:211px;height:34px;background:#eff3f6"></div>
<div class="abs" style="left:514px;top:570.50px;font-size:13px;line-height:20px;white-space:nowrap;width:211px;text-align:center;color:#a4b3c5;letter-spacing:-0.33px">PROCESS PROFILE RULES</div>
<div class="abs" style="left:727px;top:563px;width:176px;height:34px;background:#eff3f6"></div>
<div class="abs" style="left:727px;top:570.50px;font-size:13px;line-height:20px;white-space:nowrap;width:176px;text-align:center;color:#a4b3c5;letter-spacing:-0.22px">FILE ACCESS RULES</div>
<div class="abs" style="left:905px;top:563px;width:158px;height:34px;background:#d8e0e8"></div>
<div class="abs" style="left:905px;top:570.50px;font-size:13px;line-height:20px;white-space:nowrap;width:158px;text-align:center;color:#434b56;letter-spacing:-0.24px">NETWORK RULES</div>
<div class="abs" style="left:1065px;top:563px;width:163px;height:34px;background:#eff3f6"></div>
<div class="abs" style="left:1065px;top:570.50px;font-size:13px;line-height:20px;white-space:nowrap;width:163px;text-align:center;color:#a4b3c5;letter-spacing:-0.4px">RESPONSE RULES</div>
<div class="abs" style="left:1230px;top:563px;width:74px;height:34px;background:#eff3f6"></div>
<div class="abs" style="left:1230px;top:570.50px;font-size:13px;line-height:20px;white-space:nowrap;width:74px;text-align:center;color:#a4b3c5;letter-spacing:0.03px">DLP</div>
<div class="abs" style="left:1306px;top:563px;width:77px;height:34px;background:#eff3f6"></div>
<div class="abs" style="left:1306px;top:570.50px;font-size:13px;line-height:20px;white-space:nowrap;width:77px;text-align:center;color:#a4b3c5;letter-spacing:0.03px">WAF</div>
<div class="abs" style="left:243px;top:597px;width:1367px;height:7px;background:#d8e0e8"></div>
<div class="abs" style="left:1435px;top:609px;width:175px;height:30px;border:1px solid #d3dde8;background:#fff"></div>
<svg class="abs" style="left:1446px;top:619px" width="12" height="12" viewBox="0 0 12 12"><path d="M0.5 0.5 H11.5 L7.2 5.5 V11.5 L4.8 9.5 V5.5 Z" fill="#7e858e"/></svg>
<div class="abs" style="left:1466px;top:614.15px;font-size:14px;line-height:20px;white-space:nowrap;color:#c3c7d0">Filter...</div>
<div class="abs" style="left:243px;top:644px;width:1367px;height:31px;background:#f0f4f7;border:1px solid #d6e0ea;border-bottom:1px solid #cfdbe7"></div>
<div class="abs" style="left:320px;top:645px;width:1px;height:30px;background:#d6e0ea"></div>
<div class="abs" style="left:552px;top:645px;width:1px;height:30px;background:#d6e0ea"></div>
<div class="abs" style="left:784px;top:645px;width:1px;height:30px;background:#d6e0ea"></div>
<div class="abs" style="left:1016px;top:645px;width:1px;height:30px;background:#d6e0ea"></div>
<div class="abs" style="left:1248px;top:645px;width:1px;height:30px;background:#d6e0ea"></div>
<div class="abs" style="left:1338px;top:645px;width:1px;height:30px;background:#d6e0ea"></div>
<div class="abs" style="left:1428px;top:645px;width:1px;height:30px;background:#d6e0ea"></div>
<div class="abs" style="left:251.3px;top:650.15px;font-size:14px;line-height:20px;white-space:nowrap;color:#262626;font-weight:bold;letter-spacing:-.5px">ID</div>
<div class="abs" style="left:328.3px;top:650.15px;font-size:14px;line-height:20px;white-space:nowrap;color:#262626;font-weight:bold;letter-spacing:-.5px">From</div>
<div class="abs" style="left:560.3px;top:650.15px;font-size:14px;line-height:20px;white-space:nowrap;color:#262626;font-weight:bold;letter-spacing:-.5px">To</div>
<div class="abs" style="left:792.3px;top:650.15px;font-size:14px;line-height:20px;white-space:nowrap;color:#262626;font-weight:bold;letter-spacing:-.5px">Applications</div>
<div class="abs" style="left:1024.3px;top:650.15px;font-size:14px;line-height:20px;white-space:nowrap;color:#262626;font-weight:bold;letter-spacing:-.5px">Ports</div>
<div class="abs" style="left:1256.3px;top:650.15px;font-size:14px;line-height:20px;white-space:nowrap;color:#262626;font-weight:bold;letter-spacing:-.5px">Action</div>
<div class="abs" style="left:1346.3px;top:650.15px;font-size:14px;line-height:20px;white-space:nowrap;color:#262626;font-weight:bold;letter-spacing:-.5px">Type</div>
<div class="abs" style="left:1436.3px;top:650.15px;font-size:14px;line-height:20px;white-space:nowrap;color:#262626;font-weight:bold;letter-spacing:-.5px">Updated at</div>
<div class="abs" style="left:243px;top:675px;width:1367px;height:200px;border-left:1px solid #d6e0ea;background:#fff"></div>
<div class="abs" style="left:1609px;top:675px;width:1px;height:180px;background-image:linear-gradient(#b9c9db 50%,transparent 50%);background-size:1px 2px"></div>
<div class="abs" style="left:244px;top:675px;width:1365px;height:30px;background:#ebefdf"></div>
<div class="abs" style="left:244px;top:705px;width:1365px;height:30px;background:#f5f7f7"></div>
<div class="abs" style="left:244px;top:735px;width:1365px;height:30px;background:#fff"></div>
<div class="abs" style="left:244px;top:765px;width:1365px;height:30px;background:#f5f7f7"></div>
<div class="abs" style="left:244px;top:795px;width:1365px;height:30px;background:#fff"></div>
<div class="abs" style="left:244px;top:825px;width:1365px;height:30px;background:#f5f7f7"></div>
<div class="abs" style="left:320px;top:675px;width:1px;height:180px;background-image:linear-gradient(#b9c9db 50%,transparent 50%);background-size:1px 2px"></div>
<div class="abs" style="left:552px;top:675px;width:1px;height:180px;background-image:linear-gradient(#b9c9db 50%,transparent 50%);background-size:1px 2px"></div>
<div class="abs" style="left:784px;top:675px;width:1px;height:180px;background-image:linear-gradient(#b9c9db 50%,transparent 50%);background-size:1px 2px"></div>
<div class="abs" style="left:1016px;top:675px;width:1px;height:180px;background-image:linear-gradient(#b9c9db 50%,transparent 50%);background-size:1px 2px"></div>
<div class="abs" style="left:1248px;top:675px;width:1px;height:180px;background-image:linear-gradient(#b9c9db 50%,transparent 50%);background-size:1px 2px"></div>
<div class="abs" style="left:1338px;top:675px;width:1px;height:180px;background-image:linear-gradient(#b9c9db 50%,transparent 50%);background-size:1px 2px"></div>
<div class="abs" style="left:1428px;top:675px;width:1px;height:180px;background-image:linear-gradient(#b9c9db 50%,transparent 50%);background-size:1px 2px"></div>
<div class="abs" style="left:251px;top:679.15px;font-size:14px;line-height:20px;white-space:nowrap;color:#333">10428</div>
<div class="abs" style="left:327px;top:679.15px;font-size:14px;line-height:20px;white-space:nowrap;color:#333">nodes</div>
<div class="abs" style="left:559px;top:679.15px;font-size:14px;line-height:20px;white-space:nowrap;color:#333">nv.node-pod.demo</div>
<div class="abs" style="left:791px;top:679.15px;font-size:14px;line-height:20px;white-space:nowrap;color:#333">HTTP</div>
<div class="abs" style="left:1023px;top:679.15px;font-size:14px;line-height:20px;white-space:nowrap;color:#333">any</div>
<div class="abs" style="left:1255px;top:681px;width:80px;height:19px;background:#46ac4a;border-radius:2.5px"></div>
<div class="abs" style="left:1255px;top:681.53px;font-size:10px;line-height:20px;white-space:nowrap;width:80px;text-align:center;color:#fff;font-weight:bold;letter-spacing:.2px">Allow</div>
<div class="abs" style="left:1347px;top:680px;width:75px;height:20px;background:#e7d9f3;border:1px solid #cfa6f0;border-radius:3px"></div>
<div class="abs" style="left:1347px;top:681.53px;font-size:10px;line-height:20px;white-space:nowrap;width:75px;text-align:center;color:#4b4b4b;font-weight:bold;letter-spacing:.2px">Learned</div>
<div class="abs" style="left:1435px;top:679.15px;font-size:14px;line-height:20px;white-space:nowrap;color:#333">Jan 06, 2022 12:42:35</div>
<div class="abs" style="left:251px;top:709.15px;font-size:14px;line-height:20px;white-space:nowrap;color:#333">10431</div>
<div class="abs" style="left:327px;top:709.15px;font-size:14px;line-height:20px;white-space:nowrap;color:#333">nv.node-pod.demo</div>
<div class="abs" style="left:559px;top:709.15px;font-size:14px;line-height:20px;white-space:nowrap;color:#333">nv.istiod.istio-system</div>
<div class="abs" style="left:791px;top:709.15px;font-size:14px;line-height:20px;white-space:nowrap;color:#333">any</div>
<div class="abs" style="left:1023px;top:709.15px;font-size:14px;line-height:20px;white-space:nowrap;color:#333">tcp/15012</div>
<div class="abs" style="left:1255px;top:711px;width:80px;height:19px;background:#46ac4a;border-radius:2.5px"></div>
<div class="abs" style="left:1255px;top:711.53px;font-size:10px;line-height:20px;white-space:nowrap;width:80px;text-align:center;color:#fff;font-weight:bold;letter-spacing:.2px">Allow</div>
<div class="abs" style="left:1347px;top:710px;width:75px;height:20px;background:#e7d9f3;border:1px solid #cfa6f0;border-radius:3px"></div>
<div class="abs" style="left:1347px;top:711.53px;font-size:10px;line-height:20px;white-space:nowrap;width:75px;text-align:center;color:#4b4b4b;font-weight:bold;letter-spacing:.2px">Learned</div>
<div class="abs" style="left:1435px;top:709.15px;font-size:14px;line-height:20px;white-space:nowrap;color:#333">Jan 06, 2022 12:42:35</div>
<div class="abs" style="left:251px;top:739.15px;font-size:14px;line-height:20px;white-space:nowrap;color:#333">10434</div>
<div class="abs" style="left:327px;top:739.15px;font-size:14px;line-height:20px;white-space:nowrap;color:#333">nv.prometheus.istio-system</div>
<div class="abs" style="left:559px;top:739.15px;font-size:14px;line-height:20px;white-space:nowrap;color:#333">nv.node-pod.demo</div>
<div class="abs" style="left:791px;top:739.15px;font-size:14px;line-height:20px;white-space:nowrap;color:#333">any</div>
<div class="abs" style="left:1023px;top:739.15px;font-size:14px;line-height:20px;white-space:nowrap;color:#333">tcp/15020</div>
<div class="abs" style="left:1255px;top:741px;width:80px;height:19px;background:#46ac4a;border-radius:2.5px"></div>
<div class="abs" style="left:1255px;top:741.53px;font-size:10px;line-height:20px;white-space:nowrap;width:80px;text-align:center;color:#fff;font-weight:bold;letter-spacing:.2px">Allow</div>
<div class="abs" style="left:1347px;top:740px;width:75px;height:20px;background:#e7d9f3;border:1px solid #cfa6f0;border-radius:3px"></div>
<div class="abs" style="left:1347px;top:741.53px;font-size:10px;line-height:20px;white-space:nowrap;width:75px;text-align:center;color:#4b4b4b;font-weight:bold;letter-spacing:.2px">Learned</div>
<div class="abs" style="left:1435px;top:739.15px;font-size:14px;line-height:20px;white-space:nowrap;color:#333">Jan 06, 2022 12:42:35</div>
<div class="abs" style="left:251px;top:769.15px;font-size:14px;line-height:20px;white-space:nowrap;color:#333">10435</div>
<div class="abs" style="left:327px;top:769.15px;font-size:14px;line-height:20px;white-space:nowrap;color:#333">nv.node-pod.demo</div>
<div class="abs" style="left:559px;top:769.15px;font-size:14px;line-height:20px;white-space:nowrap;color:#333">nv.coredns.kube-system</div>
<div class="abs" style="left:791px;top:769.15px;font-size:14px;line-height:20px;white-space:nowrap;color:#333">DNS</div>
<div class="abs" style="left:1023px;top:769.15px;font-size:14px;line-height:20px;white-space:nowrap;color:#333">any</div>
<div class="abs" style="left:1255px;top:771px;width:80px;height:19px;background:#46ac4a;border-radius:2.5px"></div>
<div class="abs" style="left:1255px;top:771.53px;font-size:10px;line-height:20px;white-space:nowrap;width:80px;text-align:center;color:#fff;font-weight:bold;letter-spacing:.2px">Allow</div>
<div class="abs" style="left:1347px;top:770px;width:75px;height:20px;background:#e7d9f3;border:1px solid #cfa6f0;border-radius:3px"></div>
<div class="abs" style="left:1347px;top:771.53px;font-size:10px;line-height:20px;white-space:nowrap;width:75px;text-align:center;color:#4b4b4b;font-weight:bold;letter-spacing:.2px">Learned</div>
<div class="abs" style="left:1435px;top:769.15px;font-size:14px;line-height:20px;white-space:nowrap;color:#333">Jan 06, 2022 12:42:35</div>
<div class="abs" style="left:251px;top:799.15px;font-size:14px;line-height:20px;white-space:nowrap;color:#333">10494</div>
<div class="abs" style="left:327px;top:799.15px;font-size:14px;line-height:20px;white-space:nowrap;color:#333">nv.node-pod.demo</div>
<div class="abs" style="left:559px;top:799.15px;font-size:14px;line-height:20px;white-space:nowrap;color:#333">nv.redis-pod.demo</div>
<div class="abs" style="left:791px;top:799.15px;font-size:14px;line-height:20px;white-space:nowrap;color:#333">any</div>
<div class="abs" style="left:1023px;top:799.15px;font-size:14px;line-height:20px;white-space:nowrap;color:#333">tcp/6379</div>
<div class="abs" style="left:1255px;top:801px;width:80px;height:19px;background:#46ac4a;border-radius:2.5px"></div>
<div class="abs" style="left:1255px;top:801.53px;font-size:10px;line-height:20px;white-space:nowrap;width:80px;text-align:center;color:#fff;font-weight:bold;letter-spacing:.2px">Allow</div>
<div class="abs" style="left:1347px;top:800px;width:75px;height:20px;background:#e7d9f3;border:1px solid #cfa6f0;border-radius:3px"></div>
<div class="abs" style="left:1347px;top:801.53px;font-size:10px;line-height:20px;white-space:nowrap;width:75px;text-align:center;color:#4b4b4b;font-weight:bold;letter-spacing:.2px">Learned</div>
<div class="abs" style="left:1435px;top:799.15px;font-size:14px;line-height:20px;white-space:nowrap;color:#333">Jan 06, 2022 12:42:35</div>
<div class="abs" style="left:251px;top:829.15px;font-size:14px;line-height:20px;white-space:nowrap;color:#333">10504</div>
<div class="abs" style="left:327px;top:829.15px;font-size:14px;line-height:20px;white-space:nowrap;color:#333">nv.node-pod.demo</div>
<div class="abs" style="left:559px;top:829.15px;font-size:14px;line-height:20px;white-space:nowrap;color:#333">nv.istiod.istio-system</div>
<div class="abs" style="left:791px;top:829.15px;font-size:14px;line-height:20px;white-space:nowrap;color:#333">SSL</div>
<div class="abs" style="left:1023px;top:829.15px;font-size:14px;line-height:20px;white-space:nowrap;color:#333">any</div>
<div class="abs" style="left:1255px;top:831px;width:80px;height:19px;background:#46ac4a;border-radius:2.5px"></div>
<div class="abs" style="left:1255px;top:831.53px;font-size:10px;line-height:20px;white-space:nowrap;width:80px;text-align:center;color:#fff;font-weight:bold;letter-spacing:.2px">Allow</div>
<div class="abs" style="left:1347px;top:830px;width:75px;height:20px;background:#e7d9f3;border:1px solid #cfa6f0;border-radius:3px"></div>
<div class="abs" style="left:1347px;top:831.53px;font-size:10px;line-height:20px;white-space:nowrap;width:75px;text-align:center;color:#4b4b4b;font-weight:bold;letter-spacing:.2px">Learned</div>
<div class="abs" style="left:1435px;top:829.15px;font-size:14px;line-height:20px;white-space:nowrap;color:#333">Jan 06, 2022 12:51:00</div>
<!--/MAIN-->
</body></html>
